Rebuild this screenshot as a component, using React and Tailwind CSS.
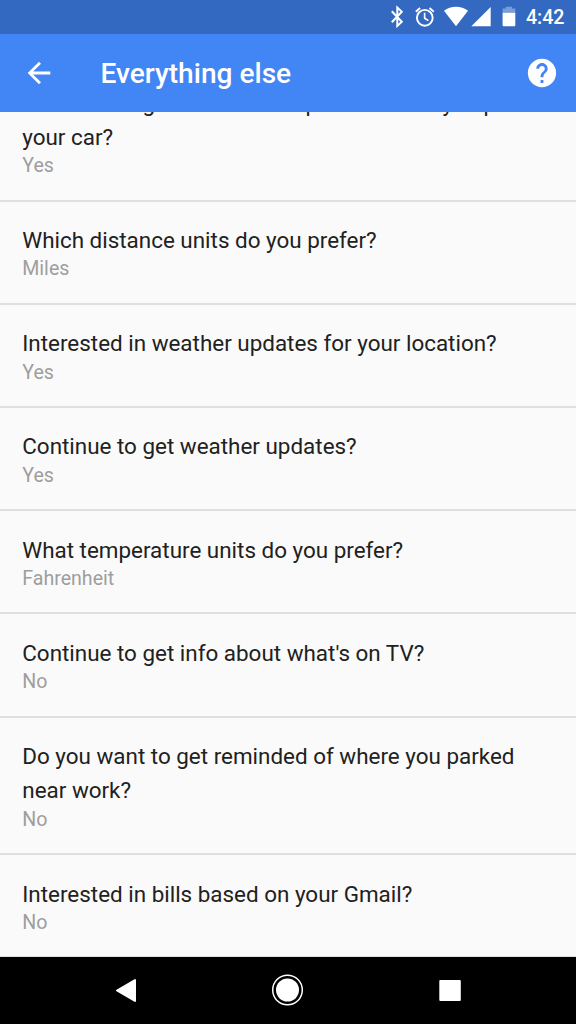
const questions = [
  { q: "Which distance units do you prefer?", a: "Miles" },
  { q: "Interested in weather updates for your location?", a: "Yes" },
  { q: "Continue to get weather updates?", a: "Yes" },
  { q: "What temperature units do you prefer?", a: "Fahrenheit" },
  { q: "Continue to get info about what's on TV?", a: "No" },
  { q: "Do you want to get reminded of where you parked near work?", a: "No" },
  { q: "Interested in bills based on your Gmail?", a: "No" },
];

function Item({ q, a }) {
  return (
    <li className="shrink-0 border-b-2 border-[#dfdfdf] px-[22.25px] pt-[21.4px] pb-[21.3px]">
      <p className="text-[22.43px] leading-[34.3px] text-[#212121]">{q}</p>
      <p className="text-[19.6px] leading-[24.2px] text-[#9e9e9e]">{a}</p>
    </li>
  );
}

function StatusBar() {
  return (
    <div className="h-[34px] shrink-0 bg-[#3469c1] text-white">
      <div className="flex h-full items-center justify-end pr-[11.5px]">
        <svg className="h-[34px] w-[136px]" viewBox="384 0 136 34" fill="currentColor">
          <path d="M391.8 11.2l10 10.5-4.5 4.3V7.5l4.5 4.2-10 10.6" fill="none" stroke="currentColor" strokeWidth="2" />
          <g fill="none" stroke="currentColor" strokeWidth="1.9">
            <circle cx="424.8" cy="17.8" r="7.9" />
            <path d="M424.6 12.7v5.5l3.8 2.5" strokeWidth="1.6" />
            <path d="M415.8 11.7l4.3-3.6M433.8 11.7l-4.3-3.6" />
          </g>
          <path d="M456 26.2L444 10.8C447.4 8 451.5 6.8 456 6.8s8.600 1.200 12 4z" />
          <path d="M471.300 26.200L490.700 7v19.200z" />
          <path d="M505.800 6.700h6.200v1.800h3.300v4.200h-12.700V8.500h3.200z" fillOpacity=".35" />
          <path d="M502.600 12.700h12.700v12.600q0 1-1 1h-10.700q-1 0-1-1z" />
        </svg>
        <span className="relative top-[1px] ml-[5.5px] text-[19.6px] leading-none font-medium">4:42</span>
      </div>
    </div>
  );
}

function AppBar() {
  return (
    <header className="flex h-[78px] shrink-0 items-center bg-[#4285f4] pr-[17px] pl-[22px] text-white">
      <svg className="h-[34px] w-[34px]" viewBox="0 0 24 24" fill="currentColor">
        <path d="M20 11H7.830l5.590-5.590L12 4l-8 8 8 8 1.410-1.410L7.830 13H20v-2z" />
      </svg>
      <h1 className="ml-[44.5px] flex-1 pt-[2px] text-[28.1px] leading-[34px] font-medium">Everything else</h1>
      <svg className="h-[34px] w-[34px]" viewBox="0 0 24 24" fill="currentColor">
        <path d="M12 2C6.480 2 2 6.480 2 12s4.480 10 10 10 10-4.480 10-10S17.520 2 12 2zm1 17h-2v-2h2v2zm2.070-7.750l-.9.920C13.450 12.900 13 13.500 13 15h-2v-.5c0-1.100.450-2.100 1.170-2.830l1.240-1.260c.370-.360.590-.860.590-1.410 0-1.100-.9-2-2-2s-2 .9-2 2H8c0-2.210 1.790-4 4-4s4 1.790 4 4c0 .880-.360 1.680-.930 2.250z" />
      </svg>
    </header>
  );
}

function NavigationBar() {
  return (
    <nav className="h-[67px] shrink-0 bg-black text-white">
      <svg className="h-[67px] w-full" viewBox="0 957 576 67" fill="currentColor">
        <path d="M117 990.500L135 980v21z" stroke="currentColor" strokeWidth="2" strokeLinejoin="round" />
        <circle cx="287.500" cy="990" r="11.500" />
        <circle cx="287.500" cy="990" r="14.800" fill="none" stroke="currentColor" strokeWidth="1.500" />
        <rect x="439.300" y="980" width="21.500" height="21" rx="1" />
      </svg>
    </nav>
  );
}

export default function App() {
  return (
    <div className="flex h-[1024px] w-[576px] flex-col overflow-hidden bg-[#fafafa] font-['Roboto',sans-serif]">
      <StatusBar />
      <AppBar />
      <main className="min-h-0 flex-1 overflow-hidden">
        <ul className="-mt-[47.8px] flex flex-col">
          <Item q="Continue to get reminded of places where you park your car?" a="Yes" />
          {questions.map((item) => (
            <Item key={item.q} {...item} />
          ))}
        </ul>
      </main>
      <NavigationBar />
    </div>
  );
}
